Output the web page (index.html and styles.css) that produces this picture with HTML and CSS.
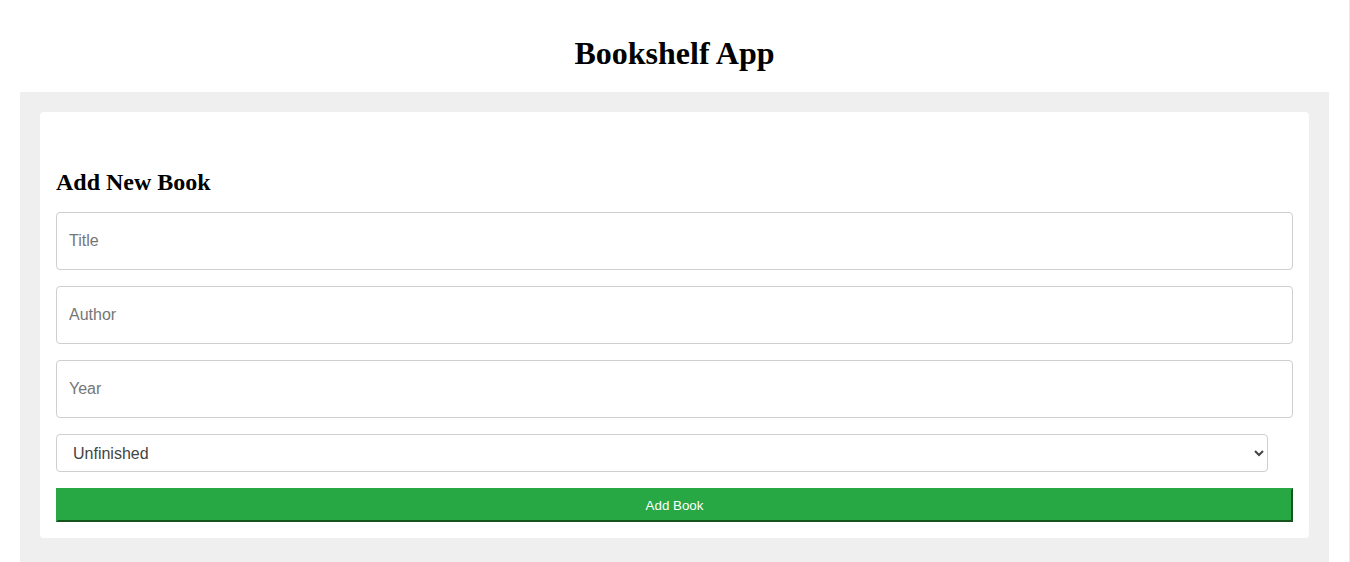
FILE: index.html
```html
<!DOCTYPE html>
<html lang="en">
<head>
<meta charset="utf-8">
<title>Bookshelf App</title>
<link rel="stylesheet" href="styles.css">
</head>
<body>
<div class="page">
  <header class="app-header">
    <h1 class="app-title">Bookshelf App</h1>
  </header>
  <main class="main">
    <section class="card">
      <h2 class="card-title">Add New Book</h2>
      <form class="book-form">
        <input class="field" type="text" placeholder="Title">
        <input class="field" type="text" placeholder="Author">
        <input class="field" type="number" placeholder="Year">
        <select class="status">
          <option>Unfinished</option>
          <option>Finished</option>
        </select>
        <button class="submit" type="button">Add Book</button>
      </form>
    </section>
  </main>
</div>
</body>
</html>
```

FILE: styles.css
```css
html {
  margin: 0;
  padding: 0;
  background: #ffffff;
  overflow: hidden;
}

body {
  margin: 0;
  padding: 0;
  font-family: "Liberation Serif", "Times New Roman", serif;
  color: #000;
}

.page {
  width: 1349px;
  min-height: 562px;
  border-right: 1px solid #ebebeb;
  box-sizing: content-box;
}

.app-header {
  padding-top: 35px;
  height: 92px;
  box-sizing: border-box;
}

.app-title {
  margin: 0;
  text-align: center;
  font-size: 32px;
  font-weight: bold;
  line-height: 37px;
}

.main {
  margin: 0 20px;
  background: #efefef;
  padding: 20px 20px 30px;
}

.card {
  background: #ffffff;
  border-radius: 4px;
  padding: 56px 16px 16px;
}

.card-title {
  margin: 0 0 16px;
  font-size: 24px;
  font-weight: bold;
  line-height: 28px;
}

.book-form {
  display: flex;
  flex-direction: column;
  align-items: flex-start;
  gap: 16px;
}

.field {
  width: 100%;
  height: 58px;
  box-sizing: border-box;
  border: 1px solid #cfcfcf;
  border-radius: 4px;
  padding: 0 12px;
  font-family: "Liberation Sans", Arial, sans-serif;
  font-size: 16px;
  color: #333;
  background: #fff;
  outline: none;
  -moz-appearance: textfield;
}

.field::-webkit-outer-spin-button,
.field::-webkit-inner-spin-button {
  -webkit-appearance: none;
  margin: 0;
}

.field::placeholder {
  color: #767676;
}

.status {
  width: 98%;
  height: 38px;
  box-sizing: border-box;
  border: 1px solid #cfcfcf;
  border-radius: 4px;
  padding: 0 12px;
  font-family: "Liberation Sans", Arial, sans-serif;
  font-size: 16px;
  color: #444;
  background: #fff;
}

.submit {
  width: 100%;
  height: 34px;
  box-sizing: border-box;
  background: #28a745;
  color: #ffffff;
  border-style: solid;
  border-width: 2px;
  border-color: #28a745 #15531f #15531f #28a745;
  font-family: "Liberation Sans", Arial, sans-serif;
  font-size: 13.33px;
  cursor: pointer;
  padding: 0;
}
```
